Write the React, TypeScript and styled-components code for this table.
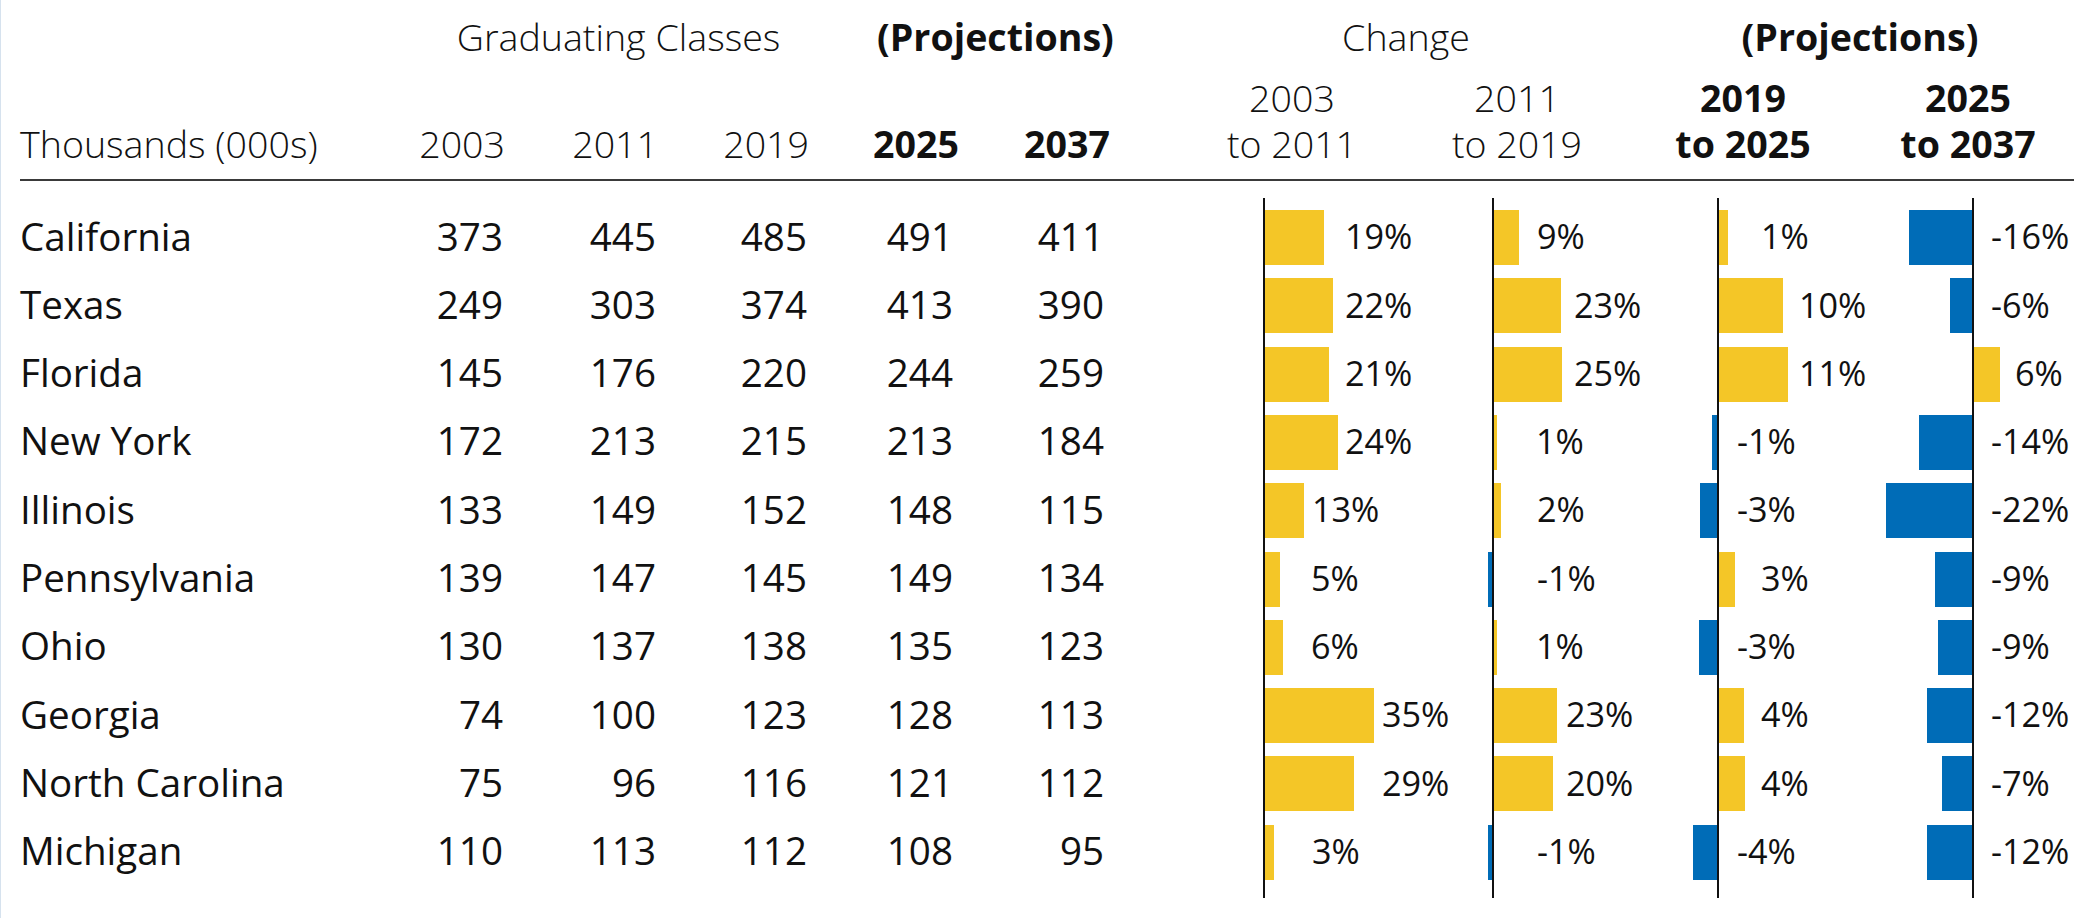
import React from "react";
import styled, { createGlobalStyle } from "styled-components";

const GlobalStyle = createGlobalStyle`
  html, body { margin: 0; padding: 0; background: #ffffff; }
  body {
    font-family: "Open Sans", "Liberation Sans", sans-serif;
    color: #111111;
    overflow: hidden;
  }
`;

const ROW_H = 68.3;
const TABLE_TEMPLATE = "335px 148px 153px 151px 146px 151px";
const HEAD_TEMPLATE = `${TABLE_TEMPLATE} 346px 190px 220px 1fr`;
const BODY_TEMPLATE = `${TABLE_TEMPLATE} 346px 190px 220px 228px`;

type Row = {
  name: string;
  values: number[];
  change: number[];
};

const rows: Row[] = [
  { name: "California", values: [373, 445, 485, 491, 411], change: [19, 9, 1, -16] },
  { name: "Texas", values: [249, 303, 374, 413, 390], change: [22, 23, 10, -6] },
  { name: "Florida", values: [145, 176, 220, 244, 259], change: [21, 25, 11, 6] },
  { name: "New York", values: [172, 213, 215, 213, 184], change: [24, 1, -1, -14] },
  { name: "Illinois", values: [133, 149, 152, 148, 115], change: [13, 2, -3, -22] },
  { name: "Pennsylvania", values: [139, 147, 145, 149, 134], change: [5, -1, 3, -9] },
  { name: "Ohio", values: [130, 137, 138, 135, 123], change: [6, 1, -3, -9] },
  { name: "Georgia", values: [74, 100, 123, 128, 113], change: [35, 23, 4, -12] },
  { name: "North Carolina", values: [75, 96, 116, 121, 112], change: [29, 20, 4, -7] },
  { name: "Michigan", values: [110, 113, 112, 108, 95], change: [3, -1, -4, -12] },
];

type ChartSpec = {
  neg: number;
  widths: number[];
  offsets: number[];
};

const charts: ChartSpec[] = [
  {
    neg: 159,
    widths: [59, 68, 64, 73, 39, 15, 18, 109, 89, 9],
    offsets: [81, 81, 81, 81, 48, 47, 47, 118, 118, 48],
  },
  {
    neg: 42,
    widths: [25, 67, 68, 3, 7, -4, 3, 63, 59, -4],
    offsets: [44, 81, 81, 43, 44, 44, 43, 73, 73, 44],
  },
  {
    neg: 77,
    widths: [9, 64, 69, -5, -17, 16, -18, 25, 26, -24],
    offsets: [43, 81, 81, 19, 19, 43, 19, 43, 43, 19],
  },
  {
    neg: 112,
    widths: [-63, -22, 26, -53, -86, -37, -34, -45, -30, -45],
    offsets: [18, 18, 42, 18, 18, 18, 18, 18, 18, 18],
  },
];

const years = [
  { label: "2003", bold: false },
  { label: "2011", bold: false },
  { label: "2019", bold: false },
  { label: "2025", bold: true },
  { label: "2037", bold: true },
];

const changeHeads = [
  { from: "2003", to: "to 2011", bold: false, shift: 15 },
  { from: "2011", to: "to 2019", bold: false, shift: -28 },
  { from: "2019", to: "to 2025", bold: true, shift: -7 },
  { from: "2025", to: "to 2037", bold: true, shift: 1 },
];

const Page = styled.div`
  width: 2088px;
  min-height: 918px;
  box-sizing: border-box;
  border-left: 1px solid #d6e2ee;
  padding: 14px 0 0 19px;
`;

const Header = styled.header`
  display: grid;
  grid-template-columns: ${HEAD_TEMPLATE};
  grid-template-rows: 46px auto;
  row-gap: 15px;
  margin-right: 14px;
  padding-bottom: 12px;
  border-bottom: 2px solid #3a3a3a;
  font-size: 37.6px;
  line-height: 46px;
`;

const GroupHead = styled.div<{ $span: string; $shift: number; $bold?: boolean }>`
  grid-row: 1;
  grid-column: ${(p) => p.$span};
  text-align: center;
  white-space: nowrap;
  font-weight: ${(p) => (p.$bold ? 700 : 300)};
  padding-left: ${(p) => Math.max(0, 2 * p.$shift)}px;
  padding-right: ${(p) => Math.max(0, -2 * p.$shift)}px;
`;

const CornerHead = styled.div`
  grid-row: 2;
  grid-column: 1;
  align-self: end;
  font-weight: 300;
  white-space: nowrap;
`;

const YearHead = styled.div<{ $bold: boolean }>`
  grid-row: 2;
  align-self: end;
  text-align: right;
  font-weight: ${(p) => (p.$bold ? 700 : 300)};
  margin-right: ${(p) => (p.$bold ? -6 : -2)}px;
`;

const ChangeHead = styled.div<{ $bold: boolean; $shift: number }>`
  grid-row: 2;
  display: flex;
  flex-direction: column;
  align-items: center;
  white-space: nowrap;
  font-weight: ${(p) => (p.$bold ? 700 : 300)};
  padding-left: ${(p) => Math.max(0, 2 * p.$shift)}px;
  padding-right: ${(p) => Math.max(0, -2 * p.$shift)}px;
`;

const Body = styled.main`
  display: grid;
  grid-template-columns: ${BODY_TEMPLATE};
  align-items: start;
`;

const NumberTable = styled.div`
  grid-column: 1 / 7;
  display: grid;
  grid-template-columns: ${TABLE_TEMPLATE};
  grid-auto-rows: ${ROW_H}px;
  padding-top: 22.4px;
  font-size: 38.6px;
`;

const NameCell = styled.div`
  display: flex;
  align-items: center;
  padding-bottom: 4px;
  white-space: nowrap;
`;

const NumCell = styled(NameCell)`
  justify-content: flex-end;
`;

const ChartColumn = styled.div`
  padding-top: 17px;
`;

const Plot = styled.div<{ $neg: number }>`
  margin-left: ${(p) => p.$neg}px;
  border-left: 2px solid #111111;
  padding: 5.4px 0 12px;
`;

const BarRow = styled.div<{ $neg: number }>`
  margin-left: ${(p) => -p.$neg - 2}px;
  height: ${ROW_H}px;
  display: grid;
  grid-template-columns: ${(p) => p.$neg}px 2px 1fr;
`;

const NegSlot = styled.div`
  display: flex;
  align-items: center;
  justify-content: flex-end;
`;

const PosSlot = styled.div`
  grid-column: 3;
  display: grid;
  align-items: center;
  justify-items: start;
  & > * {
    grid-area: 1 / 1;
  }
`;

const Bar = styled.div<{ $down: boolean }>`
  height: 55px;
  background: ${(p) => (p.$down ? "#006cb7" : "#f4c627")};
`;

const Pct = styled.span<{ $offset: number }>`
  margin-left: ${(p) => p.$offset - 1}px;
  padding-bottom: 3.6px;
  font-size: 34.2px;
  white-space: nowrap;
`;

function Chart({ spec, index }: { spec: ChartSpec; index: number }) {
  return (
    <ChartColumn>
      <Plot $neg={spec.neg}>
        {rows.map((row, r) => {
          const w = spec.widths[r];
          const v = row.change[index];
          return (
            <BarRow key={row.name} $neg={spec.neg}>
              <NegSlot>{w < 0 && <Bar $down style={{ width: -w }} />}</NegSlot>
              <PosSlot>
                {w > 0 && <Bar $down={false} style={{ width: w }} />}
                <Pct $offset={spec.offsets[r]}>{`${v}%`}</Pct>
              </PosSlot>
            </BarRow>
          );
        })}
      </Plot>
    </ChartColumn>
  );
}

export default function App() {
  return (
    <>
      <GlobalStyle />
      <Page>
        <Header>
          <GroupHead $span="2 / 5" $shift={37.5}>
            Graduating Classes
          </GroupHead>
          <GroupHead $span="5 / 7" $shift={35} $bold>
            (Projections)
          </GroupHead>
          <GroupHead $span="7 / 9" $shift={34}>
            Change
          </GroupHead>
          <GroupHead $span="9 / 11" $shift={3} $bold>
            (Projections)
          </GroupHead>
          <CornerHead>Thousands (000s)</CornerHead>
          {years.map((y) => (
            <YearHead key={y.label} $bold={y.bold}>
              {y.label}
            </YearHead>
          ))}
          {changeHeads.map((c) => (
            <ChangeHead key={c.to} $bold={c.bold} $shift={c.shift}>
              <span>{c.from}</span>
              <span>{c.to}</span>
            </ChangeHead>
          ))}
        </Header>
        <Body>
          <NumberTable>
            {rows.map((row) => (
              <React.Fragment key={row.name}>
                <NameCell>{row.name}</NameCell>
                {row.values.map((v, i) => (
                  <NumCell key={i}>{v}</NumCell>
                ))}
              </React.Fragment>
            ))}
          </NumberTable>
          {charts.map((spec, i) => (
            <Chart key={i} spec={spec} index={i} />
          ))}
        </Body>
      </Page>
    </>
  );
}
